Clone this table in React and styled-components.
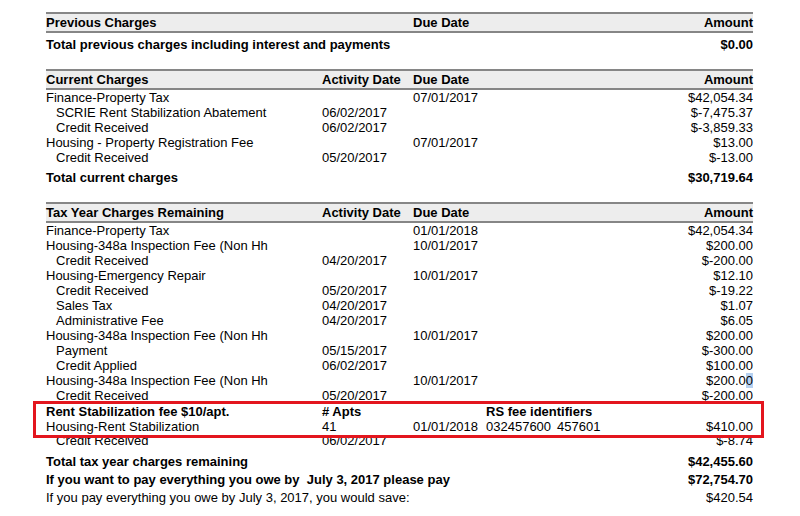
import React from 'react';
import styled, { createGlobalStyle } from 'styled-components';

const GlobalStyle = createGlobalStyle`
  html, body {
    margin: 0;
    padding: 0;
    background: #fff;
  }
  body {
    font-family: "Liberation Sans", Arial, sans-serif;
    color: #000;
  }
`;

const Sheet = styled.div`
  width: 707px;
  margin: 12px 0 0 46px;
`;

const Section = styled.section`
  & + & {
    margin-top: 16px;
  }
`;

const Row = styled.div`
  display: grid;
  grid-template-columns: 276px 91px 220px 120px;
  white-space: nowrap;
  font-size: 13px;
`;

const HeadRow = styled(Row)`
  height: 17px;
  line-height: 17px;
  font-weight: bold;
  background: #ededed;
  border-top: 2px solid #868686;
  border-bottom: 2px solid #868686;
`;

const ItemRow = styled(Row)`
  height: 15px;
  line-height: 15px;
`;

const TotalRow = styled(Row)`
  padding-top: ${(p) => p.$gap || 5}px;
  line-height: 16px;
  font-weight: ${(p) => (p.$plain ? 'normal' : 'bold')};
`;

const Label = styled.span`
  padding-left: ${(p) => (p.$sub ? 10 : 0)}px;
`;

const Amount = styled.span`
  text-align: right;
`;

const Highlight = styled.span`
  background: #b6d1f0;
`;

const Items = styled.div`
  position: relative;
`;

const Callout = styled.div`
  position: absolute;
  top: 178px;
  left: -13px;
  right: -11px;
  padding: 0 8px 1px 10px;
  background: #fff;
  border: 3px solid #e3161e;
`;

const CalloutRow = styled(Row)`
  height: 15px;
  line-height: 15px;
  font-weight: ${(p) => (p.$bold ? 'bold' : 'normal')};
`;

const Ids = styled.span`
  display: grid;
  grid-template-columns: 73px 71px 1fr;
`;

const IdsTitle = styled.span`
  grid-column: 2 / 4;
`;

const current = [
  ['Finance-Property Tax', '', '07/01/2017', '$42,054.34'],
  ['SCRIE Rent Stabilization Abatement', '06/02/2017', '', '$-7,475.37', true],
  ['Credit Received', '06/02/2017', '', '$-3,859.33', true],
  ['Housing - Property Registration Fee', '', '07/01/2017', '$13.00'],
  ['Credit Received', '05/20/2017', '', '$-13.00', true],
];

// rows 12 and 13 sit under the callout box, so they stay blank
const remaining = [
  ['Finance-Property Tax', '', '01/01/2018', '$42,054.34'],
  ['Housing-348a Inspection Fee (Non Hh', '', '10/01/2017', '$200.00'],
  ['Credit Received', '04/20/2017', '', '$-200.00', true],
  ['Housing-Emergency Repair', '', '10/01/2017', '$12.10'],
  ['Credit Received', '05/20/2017', '', '$-19.22', true],
  ['Sales Tax', '04/20/2017', '', '$1.07', true],
  ['Administrative Fee', '04/20/2017', '', '$6.05', true],
  ['Housing-348a Inspection Fee (Non Hh', '', '10/01/2017', '$200.00'],
  ['Payment', '05/15/2017', '', '$-300.00', true],
  ['Credit Applied', '06/02/2017', '', '$100.00', true],
  ['Housing-348a Inspection Fee (Non Hh', '', '10/01/2017', 'SELECTED'],
  ['Credit Received', '05/20/2017', '', '$-200.00', true],
  ['', '', '', ''],
  ['', '', '', ''],
  ['Credit Received', '06/02/2017', '', '$-8.74', true],
];

const ChargeRows = ({ rows }) =>
  rows.map(([label, activity, due, amount, sub], i) => (
    <ItemRow key={i}>
      <Label $sub={sub}>{label}</Label>
      <span>{activity}</span>
      <span>{due}</span>
      <Amount>
        {amount === 'SELECTED' ? (
          <>
            $200.0<Highlight>0</Highlight>
          </>
        ) : (
          amount
        )}
      </Amount>
    </ItemRow>
  ));

const App = () => {
  return (
    <>
      <GlobalStyle />
      <Sheet>
        <Section>
          <HeadRow>
            <span>Previous Charges</span>
            <span />
            <span>Due Date</span>
            <Amount>Amount</Amount>
          </HeadRow>
          <TotalRow $gap={4}>
            <span>Total previous charges including interest and payments</span>
            <span />
            <span />
            <Amount>$0.00</Amount>
          </TotalRow>
        </Section>

        <Section>
          <HeadRow>
            <span>Current Charges</span>
            <span>Activity Date</span>
            <span>Due Date</span>
            <Amount>Amount</Amount>
          </HeadRow>
          <Items>
            <ChargeRows rows={current} />
          </Items>
          <TotalRow>
            <span>Total current charges</span>
            <span />
            <span />
            <Amount>$30,719.64</Amount>
          </TotalRow>
        </Section>

        <Section>
          <HeadRow>
            <span>Tax Year Charges Remaining</span>
            <span>Activity Date</span>
            <span>Due Date</span>
            <Amount>Amount</Amount>
          </HeadRow>
          <Items>
            <ChargeRows rows={remaining} />
            <Callout>
              <CalloutRow $bold>
                <span>Rent Stabilization fee $10/apt.</span>
                <span># Apts</span>
                <Ids>
                  <span />
                  <IdsTitle>RS fee identifiers</IdsTitle>
                </Ids>
                <span />
              </CalloutRow>
              <CalloutRow>
                <span>Housing-Rent Stabilization</span>
                <span>41</span>
                <Ids>
                  <span>01/01/2018</span>
                  <span>032457600</span>
                  <span>457601</span>
                </Ids>
                <Amount>$410.00</Amount>
              </CalloutRow>
            </Callout>
          </Items>
          <TotalRow $gap={6}>
            <span>Total tax year charges remaining</span>
            <span />
            <span />
            <Amount>$42,455.60</Amount>
          </TotalRow>
          <TotalRow $gap={2}>
            <span>If you want to pay everything you owe by&nbsp; July 3, 2017 please pay</span>
            <span />
            <span />
            <Amount>$72,754.70</Amount>
          </TotalRow>
          <TotalRow $gap={2} $plain>
            <span>If you pay everything you owe by July 3, 2017, you would save:</span>
            <span />
            <span />
            <Amount>$420.54</Amount>
          </TotalRow>
        </Section>
      </Sheet>
    </>
  );
};

export default App;
